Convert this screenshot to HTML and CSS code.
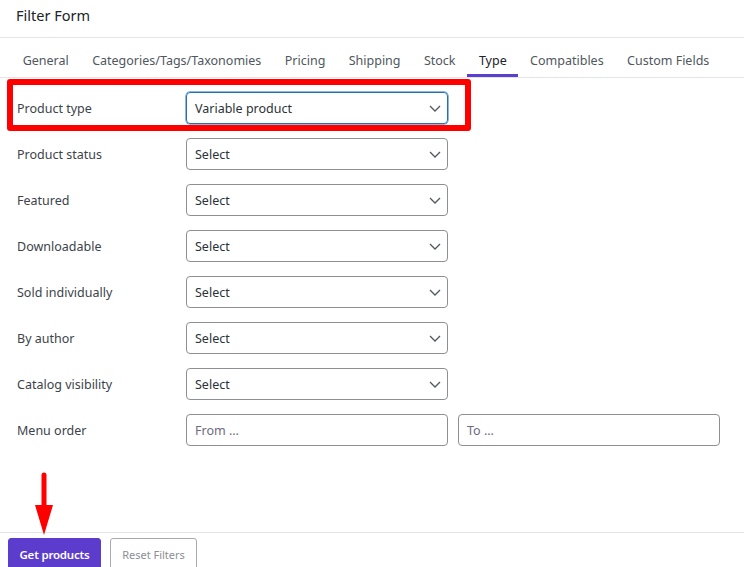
FILE: index.html
```html
<!DOCTYPE html>
<html lang="en">
<head>
<meta charset="utf-8">
<title>Filter Form</title>
<link rel="stylesheet" href="styles.css">
</head>
<body>
<div class="page">
  <header class="header"><h1 class="title">Filter Form</h1></header>
  <nav class="tabs">
    <span class="tab">General</span>
    <span class="tab">Categories/Tags/Taxonomies</span>
    <span class="tab">Pricing</span>
    <span class="tab">Shipping</span>
    <span class="tab">Stock</span>
    <span class="tab active">Type</span>
    <span class="tab">Compatibles</span>
    <span class="tab">Custom Fields</span>
  </nav>
  <div class="form">
    <div class="row">
      <span class="label">Product type</span>
      <div class="select focused"><span>Variable product</span><svg class="chev" viewBox="0 0 12 7"><path d="M1 1l5 5 5-5"/></svg></div>
    </div>
    <div class="row">
      <span class="label">Product status</span>
      <div class="select"><span>Select</span><svg class="chev" viewBox="0 0 12 7"><path d="M1 1l5 5 5-5"/></svg></div>
    </div>
    <div class="row">
      <span class="label">Featured</span>
      <div class="select"><span>Select</span><svg class="chev" viewBox="0 0 12 7"><path d="M1 1l5 5 5-5"/></svg></div>
    </div>
    <div class="row">
      <span class="label">Downloadable</span>
      <div class="select"><span>Select</span><svg class="chev" viewBox="0 0 12 7"><path d="M1 1l5 5 5-5"/></svg></div>
    </div>
    <div class="row">
      <span class="label">Sold individually</span>
      <div class="select"><span>Select</span><svg class="chev" viewBox="0 0 12 7"><path d="M1 1l5 5 5-5"/></svg></div>
    </div>
    <div class="row">
      <span class="label">By author</span>
      <div class="select"><span>Select</span><svg class="chev" viewBox="0 0 12 7"><path d="M1 1l5 5 5-5"/></svg></div>
    </div>
    <div class="row">
      <span class="label">Catalog visibility</span>
      <div class="select"><span>Select</span><svg class="chev" viewBox="0 0 12 7"><path d="M1 1l5 5 5-5"/></svg></div>
    </div>
    <div class="row">
      <span class="label">Menu order</span>
      <div class="inputs">
        <div class="input placeholder">From ...</div>
        <div class="input placeholder">To ...</div>
      </div>
    </div>
  </div>
  <footer class="footer">
    <button class="btn primary">Get products</button>
    <button class="btn secondary">Reset Filters</button>
  </footer>
  <div class="highlight"></div>
  <svg class="arrow" viewBox="0 0 20 64"><path class="shaft" d="M10 3V36"/><path class="head" d="M1 33H19L10 63Z"/></svg>
</div>
</body>
</html>
```
FILE: styles.css
```css
* { box-sizing: border-box; }
html, body { margin: 0; padding: 0; background: #fff; }
body {
  font-family: "Noto Sans", "Open Sans", sans-serif;
  font-size: 12.5px;
  color: #2c3338;
  overflow: hidden;
}
.page { position: relative; width: 744px; height: 567px; overflow: hidden; }
.header {
  height: 38px;
  border-bottom: 1px solid #e2e4e7;
  padding: 5px 16px 0;
}
.title {
  margin: 0;
  font-size: 14.5px;
  font-weight: 400;
  line-height: 20px;
  color: #1d2327;
}
.tabs {
  display: flex;
  height: 40px;
  padding-left: 11px;
  border-bottom: 1px solid #e2e4e7;
}
.tab {
  padding: 14px 11.7px 5px;
  line-height: 17px;
  border-bottom: 3px solid transparent;
  color: #50575e;
  white-space: nowrap;
  font-size: 12.5px;
}
.tab.active { color: #1d2327; border-bottom-color: #5b3fce; }
.form {
  display: flex;
  flex-direction: column;
  gap: 14px;
  padding: 14px 0 86px 17px;
}
.row { display: flex; align-items: center; height: 32px; }
.label { width: 169px; color: #3c434a; }
.select, .input {
  height: 32px;
  border: 1px solid #8c8f94;
  border-radius: 4px;
  padding: 0 8px;
  display: flex;
  align-items: center;
}
.select { width: 262px; justify-content: space-between; color: #2c3338; }
.select.focused { border-color: #2271b1; box-shadow: 0 0 0 0.5px #2271b1; }
.chev { width: 12px; height: 7px; fill: none; stroke: #50575e; stroke-width: 1.3; margin-right: -2px; }
.inputs { display: flex; gap: 10px; }
.input { width: 262px; }
.placeholder { color: #6c6a7e; }
.footer {
  border-top: 1px solid #e2e4e7;
  padding: 5px 8px 0;
  display: flex;
  gap: 9px;
}
.btn {
  font-family: inherit;
  height: 32px;
  border-radius: 3px;
  padding: 0;
  cursor: pointer;
  text-align: center;
}
.primary { width: 93px; font-size: 11.5px; letter-spacing: -0.2px; background: #5b3ccc; border: 1px solid #5b3ccc; color: #fff; font-weight: 600; }
.secondary { width: 87px; font-size: 11px; background: #fff; border: 1px solid #a7aaad; color: #8c8f94; }
.highlight {
  position: absolute;
  left: 7px;
  top: 79px;
  width: 464px;
  height: 52px;
  border: 6px solid #ff0000;
  border-radius: 3px;
}
.arrow { position: absolute; left: 34px; top: 472px; width: 20px; height: 64px; }
.shaft { stroke: #ff0000; stroke-width: 5; stroke-linecap: round; fill: none; }
.head { fill: #ff0000; }
```
